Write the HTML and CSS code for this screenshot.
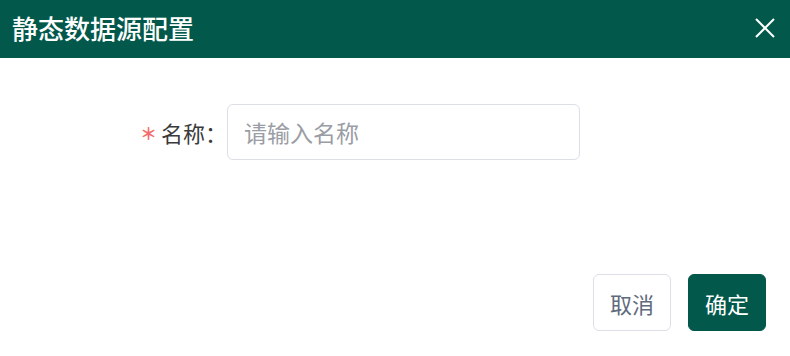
FILE: index.html
```html
<!DOCTYPE html>
<html lang="zh-CN">
<head>
    <meta charset="UTF-8">
    <meta name="viewport" content="width=device-width, initial-scale=1.0">
    <title>静态数据源配置</title>
    <link rel="stylesheet" href="styles.css">
</head>
<body>
    <div class="dialog">
        <div class="dialog-header">
            <span class="dialog-title">静态数据源配置</span>
            <button class="dialog-close" aria-label="关闭">
                <svg width="22" height="22" viewBox="0 0 22 22">
                    <path d="M2 2 L20 20 M20 2 L2 20" stroke="#fff" stroke-width="2" fill="none"/>
                </svg>
            </button>
        </div>
        <div class="dialog-body">
            <div class="form-item">
                <label class="form-label"><span class="required">＊</span>名称：</label>
                <input class="form-input" type="text" placeholder="请输入名称">
            </div>
        </div>
        <div class="dialog-footer">
            <button class="btn">取消</button>
            <button class="btn btn-primary">确定</button>
        </div>
    </div>
</body>
</html>
```

FILE: styles.css
```css
body {
    margin: 0;
    background-color: #fff;
    font-family: "Noto Sans CJK SC", "Noto Sans", sans-serif;
}

.dialog {
    width: 790px;
    height: 356px;
    display: flex;
    flex-direction: column;
}

.dialog-header {
    height: 58px;
    background-color: #02594b;
    display: flex;
    align-items: center;
    justify-content: space-between;
    padding: 0 12px;
}

.dialog-title {
    color: #fff;
    font-size: 26px;
    font-weight: 500;
    line-height: 1;
    margin-top: -2px;
}

.dialog-close {
    background: none;
    border: none;
    padding: 0;
    width: 22px;
    height: 22px;
    margin-right: 2px;
    margin-top: -2px;
    cursor: pointer;
}

.dialog-body {
    padding-top: 46px;
}

.form-item {
    display: flex;
    align-items: center;
}

.form-label {
    width: 227px;
    text-align: right;
    font-size: 22px;
    color: #3a3a3a;
}

.required {
    color: #f56c6c;
    font-size: 17px;
    font-weight: 700;
    vertical-align: 2px;
    margin-right: 4px;
}

.form-input {
    width: 353px;
    height: 56px;
    box-sizing: border-box;
    border: 1px solid #dcdfe6;
    border-radius: 6px;
    padding: 0 16px;
    font-family: inherit;
    font-size: 23px;
    color: #333;
    outline: none;
}

.form-input::placeholder {
    color: #9a9da5;
}

.dialog-footer {
    margin-top: auto;
    margin-bottom: 25px;
    display: flex;
    justify-content: flex-end;
    gap: 17px;
    padding-right: 24px;
}

.btn {
    height: 57px;
    padding: 0 16px;
    border: 1px solid #dcdfe6;
    border-radius: 6px;
    background-color: #fff;
    color: #5f6b7c;
    font-family: inherit;
    font-size: 22px;
    cursor: pointer;
}

.btn-primary {
    background-color: #02594b;
    border-color: #02594b;
    color: #fff;
}
```
